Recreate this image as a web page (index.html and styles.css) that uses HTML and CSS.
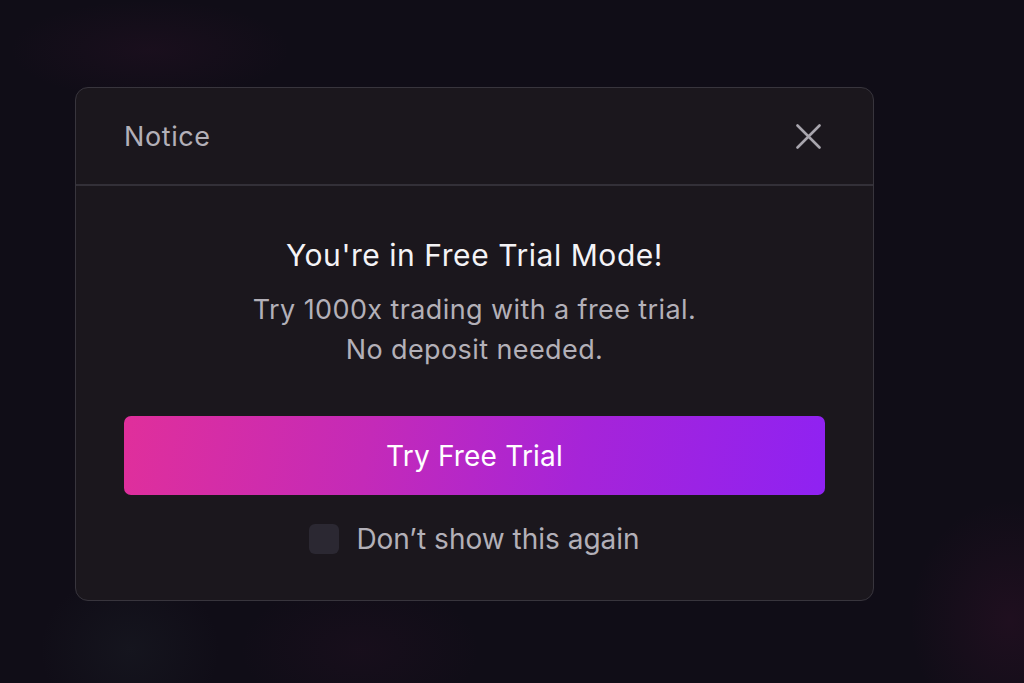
FILE: index.html
```html
<!DOCTYPE html>
<html lang="en">
<head>
    <meta charset="UTF-8">
    <meta name="viewport" content="width=device-width, initial-scale=1.0">
    <title>Notice</title>
    <link rel="stylesheet" href="styles.css">
</head>
<body>
    <div class="backdrop">
        <div class="modal">
            <div class="modal-header">
                <div class="modal-title">Notice</div>
                <button class="close-button" aria-label="Close">
                    <svg width="25" height="25" viewBox="0 0 25 25" fill="none">
                        <path d="M1.5 1.5L23.5 23.5M23.5 1.5L1.5 23.5" stroke="currentColor" stroke-width="2.6" stroke-linecap="round"/>
                    </svg>
                </button>
            </div>
            <div class="modal-body">
                <div class="headline">You're in Free Trial Mode!</div>
                <p class="message">Try 1000x trading with a free trial.<br>No deposit needed.</p>
                <button class="trial-button">Try Free Trial</button>
                <label class="dont-show">
                    <span class="checkbox"></span>
                    <span>Don’t show this again</span>
                </label>
            </div>
        </div>
    </div>
</body>
</html>
```

FILE: styles.css
```css
:root {
    --page-bg: #100d17;
    --modal-bg: #1b171d;
    --border-color: #38353d;
    --text-muted: #b3b0b8;
    --text-bright: #f4f3f6;
}

body {
    margin: 0;
    height: 100vh;
    font-family: Inter, "Noto Sans", sans-serif;
    background-color: var(--page-bg);
    background-image:
        radial-gradient(ellipse 140px 50px at 150px 50px, rgba(110, 30, 80, 0.1), transparent),
        radial-gradient(ellipse 90px 80px at 130px 650px, rgba(70, 100, 100, 0.09), transparent),
        radial-gradient(ellipse 120px 70px at 360px 650px, rgba(110, 30, 80, 0.08), transparent),
        radial-gradient(ellipse 100px 120px at 1010px 620px, rgba(140, 30, 90, 0.12), transparent);
    overflow: hidden;
}

.backdrop {
    padding: 87px 0 0 75px;
}

.modal {
    width: 797px;
    background: var(--modal-bg);
    border: 1px solid var(--border-color);
    border-radius: 13px;
}

.modal-header {
    display: flex;
    align-items: center;
    justify-content: space-between;
    height: 96px;
    padding: 0 52px 0 48px;
    border-bottom: 2px solid #333038;
}

.modal-title {
    font-size: 27px;
    color: var(--text-muted);
    letter-spacing: 0.6px;
}

.close-button {
    background: none;
    border: none;
    padding: 0;
    color: #a8a5ad;
    cursor: pointer;
    display: flex;
}

.modal-body {
    display: flex;
    flex-direction: column;
    align-items: center;
    padding: 51px 48px 46px;
}

.headline {
    font-size: 30px;
    line-height: 36px;
    color: var(--text-bright);
    letter-spacing: 0.55px;
}

.message {
    margin: 17px 0 0;
    font-size: 27px;
    line-height: 40px;
    color: var(--text-muted);
    text-align: center;
    letter-spacing: 0.4px;
}

.trial-button {
    margin-top: 46px;
    width: 100%;
    height: 79px;
    border: none;
    border-radius: 7px;
    background: linear-gradient(100deg, #e02f9b 0%, #c42ab8 35%, #a624d8 65%, #8f22f2 100%);
    color: #ffffff;
    font-family: inherit;
    font-size: 28px;
    letter-spacing: 0.2px;
    cursor: pointer;
}

.dont-show {
    margin-top: 29px;
    display: flex;
    align-items: center;
    gap: 17px;
    font-size: 28px;
    line-height: 30px;
    color: var(--text-muted);
    letter-spacing: 0;
    cursor: pointer;
}

.checkbox {
    width: 30px;
    height: 30px;
    border-radius: 6px;
    background: #2b2832;
}
```
